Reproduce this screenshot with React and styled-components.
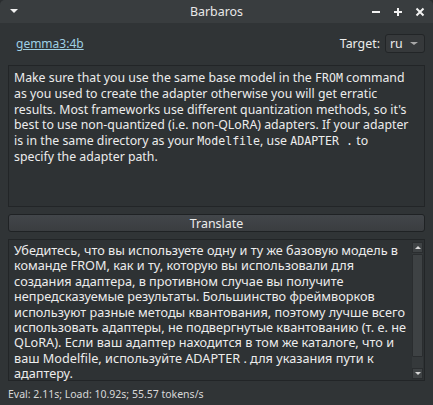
import React from 'react'
import styled, { createGlobalStyle } from 'styled-components'

const Global = createGlobalStyle`
html, body { margin: 0; padding: 0; background: #2b2e30; }
body { font-family: "Noto Sans", "DejaVu Sans", sans-serif; }
`

const target = [
  'Убедитесь, что вы используете одну и ту же базовую модель в',
  'команде FROM, как и ту, которую вы использовали для',
  'создания адаптера, в противном случае вы получите',
  'непредсказуемые результаты. Большинство фреймворков',
  'используют разные методы квантования, поэтому лучше всего',
  'использовать адаптеры, не подвергнутые квантованию (т. е. не',
  'QLoRA). Если ваш адаптер находится в том же каталоге, что и',
  'ваш Modelfile, используйте ADAPTER . для указания пути к',
  'адаптеру.',
]

const App = () => {
  const source = [
    <>Make sure that you use the same base model in the <Mono>FROM</Mono> command</>,
    <>as you used to create the adapter otherwise you will get erratic</>,
    <>results. Most frameworks use different quantization methods, so it's</>,
    <>best to use non-quantized (i.e. non-QLoRA) adapters. If your adapter</>,
    <>is in the same directory as your <Mono>Modelfile</Mono>, use <Mono>ADAPTER .</Mono> to</>,
    <>specify the adapter path.</>,
  ]
  return (
    <>
      <Global />
      <Window>
        <TitleBar>
          <MenuArrow />
          <Title>Barbaros</Title>
          <Controls>
            <svg width="10" height="10" viewBox="0 0 10 10"><rect x="1" y="4" width="8" height="2" fill="#f2f2f2" /></svg>
            <svg width="10" height="10" viewBox="0 0 10 10"><rect x="1" y="4" width="8" height="2" fill="#f2f2f2" /><rect x="4" y="1" width="2" height="8" fill="#f2f2f2" /></svg>
            <svg width="10" height="10" viewBox="0 0 10 10"><path d="M1.5 1.5 L8.5 8.5 M8.5 1.5 L1.5 8.5" stroke="#f2f2f2" strokeWidth="2" /></svg>
          </Controls>
        </TitleBar>
        <Body>
          <TopRow>
            <ModelLink href="#">gemma3:4b</ModelLink>
            <TargetBox>
              <Label>Target:</Label>
              <Combo>
                <span>ru</span>
                <ComboArrow />
              </Combo>
            </TargetBox>
          </TopRow>
          <TextPane $size={12.3}>
            {source.map((l, i) => <Line key={i}>{l}</Line>)}
          </TextPane>
          <Button>Translate</Button>
          <TextPane $scroll $size={12.7}>
            <Lines>
              {target.map((l, i) => <Line key={i}>{l}</Line>)}
            </Lines>
            <ScrollBar>
              <ScrollBtn><UpArrow /></ScrollBtn>
              <Trough><Thumb /></Trough>
              <ScrollBtn><DownArrow /></ScrollBtn>
            </ScrollBar>
          </TextPane>
          <Status>Eval: 2.11s; Load: 10.92s; 55.57 tokens/s</Status>
        </Body>
      </Window>
    </>
  )
}

export default App

const Window = styled.div`
width: 433px;
height: 405px;
display: flex;
flex-direction: column;
background: #303436;
border-radius: 5px 5px 0 0;
overflow: hidden;
color: #ececec;
`
const TitleBar = styled.div`
height: 23px;
flex: none;
display: flex;
align-items: center;
background: #393d3f;
position: relative;
padding: 0 6px 0 10px;
`
const MenuArrow = styled.div`
width: 0;
height: 0;
border-left: 4px solid transparent;
border-right: 4px solid transparent;
border-top: 4px solid #f2f2f2;
margin-top: -1px;
`
const Title = styled.div`
position: absolute;
left: 0;
right: 0;
text-align: center;
font-size: 12.4px;
color: #e8e8e8;
pointer-events: none;
`
const Controls = styled.div`
margin-left: auto;
display: flex;
gap: 12px;
align-items: center;
padding-right: 2px;
`
const Body = styled.div`
flex: 1;
display: flex;
flex-direction: column;
padding: 9px 8px 0 8px;
`
const TopRow = styled.div`
display: flex;
align-items: center;
justify-content: space-between;
height: 23px;
padding-left: 8px;
margin-bottom: 10px;
`
const ModelLink = styled.a`
color: #9fd0e4;
font-size: 12px;
text-decoration: underline;
`
const TargetBox = styled.div`
display: flex;
align-items: center;
gap: 5px;
`
const Label = styled.span`
font-size: 12.4px;
`
const Combo = styled.div`
width: 40px;
height: 19px;
box-sizing: border-box;
border: 1px solid #222527;
border-radius: 3px;
background: #36393b;
display: flex;
align-items: center;
justify-content: space-between;
padding: 0 6px 0 4px;
font-size: 12.4px;
`
const ComboArrow = styled.div`
width: 0;
height: 0;
border-left: 4px solid transparent;
border-right: 4px solid transparent;
border-top: 3px solid #a8a8a8;
`
const TextPane = styled.div`
height: 142px;
flex: none;
box-sizing: border-box;
border: 1px solid #222527;
background: #2e3234;
padding: ${p => (p.$scroll ? '2px 1px 1px 5px' : '4px 5px 3px')};
font-size: ${p => p.$size}px;
line-height: 15.4px;
display: flex;
flex-direction: ${p => (p.$scroll ? 'row' : 'column')};
`
const Lines = styled.div`
flex: 1;
padding-top: 1px;
`
const Line = styled.div`
white-space: nowrap;
`
const Mono = styled.span`
font-family: "DejaVu Sans Mono", monospace;
font-size: 11.6px;
`
const Button = styled.div`
margin: 7px 0 7px 0;
height: 18px;
flex: none;
box-sizing: border-box;
border: 1px solid #1f2224;
border-radius: 3px;
background: linear-gradient(#42464a, #3a3d40);
display: flex;
align-items: center;
justify-content: center;
font-size: 12.4px;
`
const ScrollBar = styled.div`
width: 11px;
display: flex;
flex-direction: column;
margin-left: 2px;
`
const ScrollBtn = styled.div`
height: 11px;
background: #3f4345;
border: 1px solid #2a2d2f;
box-sizing: border-box;
display: flex;
align-items: center;
justify-content: center;
`
const UpArrow = styled.div`
width: 0;
height: 0;
border-left: 3px solid transparent;
border-right: 3px solid transparent;
border-bottom: 3px solid #d8d8d8;
`
const DownArrow = styled(UpArrow)`
border-bottom: none;
border-top: 3px solid #d8d8d8;
`
const Trough = styled.div`
flex: 1;
background: #35393b;
display: flex;
flex-direction: column;
padding-top: 1px;
`
const Thumb = styled.div`
height: 101px;
background: #3e4244;
border: 1px solid #2a2d2f;
border-radius: 1px;
`
const Status = styled.div`
font-size: 10.5px;
color: #d8d8d8;
padding: 6px 0 0 0;
`
